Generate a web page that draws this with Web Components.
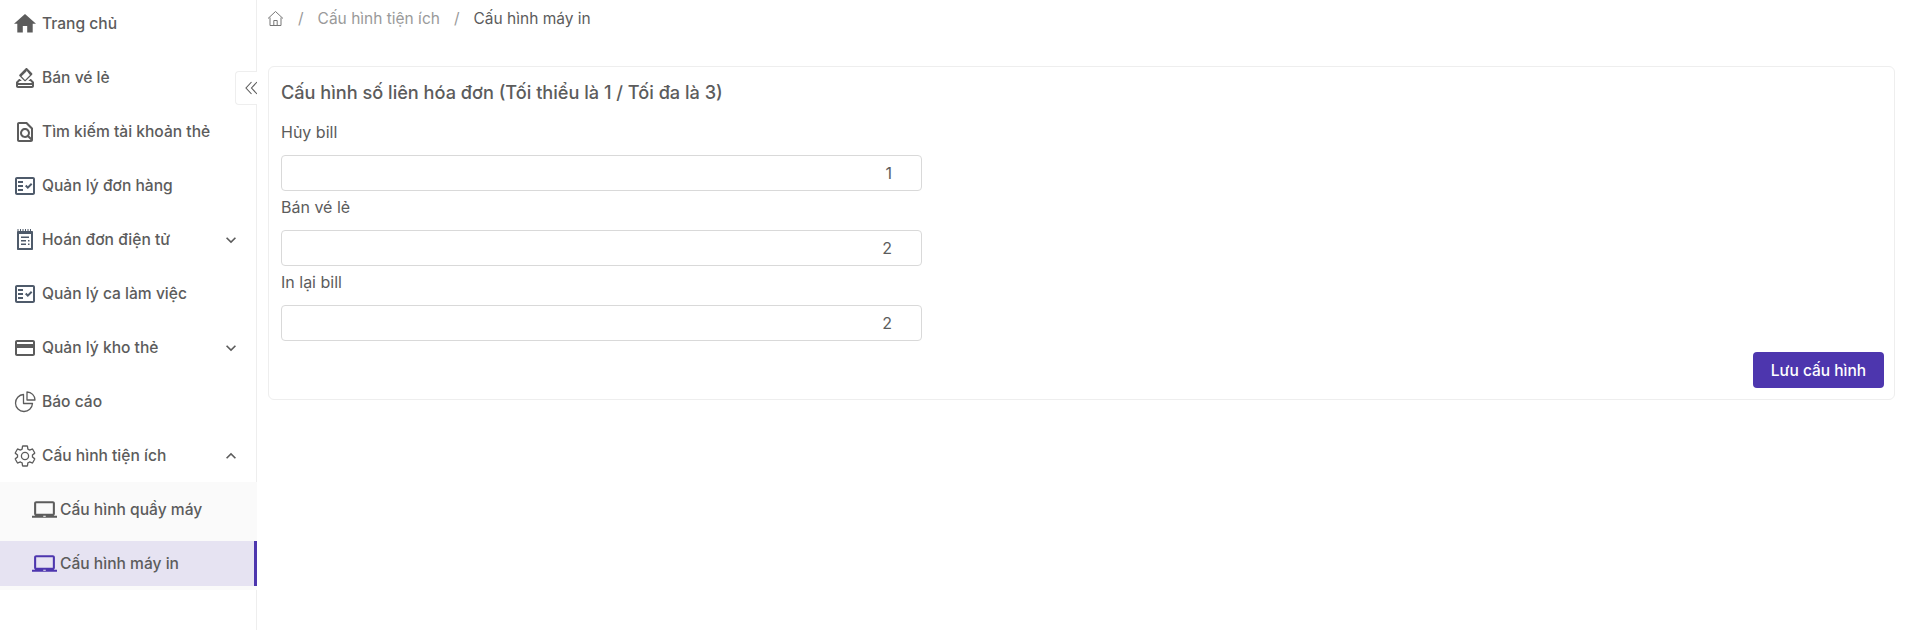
<!DOCTYPE html>
<html lang="vi">
<head>
<meta charset="utf-8">
<title>Cấu hình máy in</title>
<style>
  html, body { margin: 0; height: 100%; background: #fff; overflow: hidden; }
  body { font-family: Inter, "Noto Sans", sans-serif; color: #5c5c5c; }
</style>
</head>
<body>
<app-shell>
  <side-nav slot="nav">
    <nav-item icon="home">Trang chủ</nav-item>
    <nav-item icon="vote">Bán vé lẻ</nav-item>
    <nav-item icon="find">Tìm kiếm tài khoản thẻ</nav-item>
    <nav-item icon="check" tint="#4f5b6b">Quản lý đơn hàng</nav-item>
    <nav-item icon="note" tint="#4f5b6b" arrow="down">Hoán đơn điện tử</nav-item>
    <nav-item icon="check" tint="#4f5b6b">Quản lý ca làm việc</nav-item>
    <nav-item icon="card" arrow="down">Quản lý kho thẻ</nav-item>
    <nav-item icon="pie">Báo cáo</nav-item>
    <nav-group>
      <nav-item slot="head" icon="gear" arrow="up" flush>Cấu hình tiện ích</nav-item>
      <nav-item icon="laptop" sub>Cấu hình quầy máy</nav-item>
      <nav-item icon="laptop" sub active flush>Cấu hình máy in</nav-item>
    </nav-group>
  </side-nav>
  <bread-crumb>
    <crumb-item>Cấu hình tiện ích</crumb-item>
    <crumb-item current>Cấu hình máy in</crumb-item>
  </bread-crumb>
  <config-card title-text="Cấu hình số liên hóa đơn (Tối thiểu là 1 / Tối đa là 3)">
    <number-field label="Hủy bill">1</number-field>
    <number-field label="Bán vé lẻ">2</number-field>
    <number-field label="In lại bill">2</number-field>
    <button-primary slot="actions">Lưu cấu hình</button-primary>
  </config-card>
</app-shell>

<script>
const ICONS = {
  home: `<path transform="translate(-1.200 -1.400) scale(1.100)" d="M10 20v-6h4v6h5v-8h3L12 3 2 12h3v8z"/>`,
  vote: `<path d="M18 13h-.68l-2 2h1.91L19 17H5l1.78-2h2.05l-2-2H6l-3 3v4c0 1.1.89 2 1.99 2H19c1.1 0 2-.89 2-2v-4l-3-3zm1 7H5v-1h14v1zm-7.66-4.98c.39.39 1.02.39 1.41 0l6.36-6.36c.39-.39.39-1.02 0-1.41L14.16 2.3c-.38-.4-1.01-.4-1.4-.01L6.39 8.66c-.39.39-.39 1.02 0 1.41l4.95 4.95zm2.12-10.61L17 8.95l-4.95 4.95-3.54-3.54 4.95-4.95z"/>`,
  find: `<path d="M14 2H6c-1.1 0-2 .9-2 2v16c0 1.1.9 2 2 2h12c1.1 0 2-.9 2-2V8l-6-6zM6 4h7l5 5v8.58l-1.84-1.84c1.28-1.94 1.07-4.57-.64-6.28C14.55 8.49 13.28 8 12 8c-1.28 0-2.55.49-3.53 1.46-1.95 1.95-1.95 5.11 0 7.05.97.97 2.25 1.46 3.53 1.46.96 0 1.92-.28 2.75-.83L17.6 20H6V4zm8.11 11.1c-.56.56-1.31.88-2.11.88s-1.55-.31-2.11-.88c-.56-.56-.88-1.31-.88-2.11s.31-1.55.88-2.11c.56-.57 1.31-.88 2.11-.88s1.55.31 2.11.88c.56.56.88 1.31.88 2.11s-.31 1.55-.88 2.11z"/>`,
  check: `<path fill-rule="evenodd" d="M20 3H4c-1.1 0-2 .9-2 2v14c0 1.1.9 2 2 2h16c1.1 0 2-.9 2-2V5c0-1.1-.9-2-2-2zm0 16H4V5h16v14z"/><path d="M19.41 10.42 17.99 9l-3.17 3.17-1.41-1.42L12 12.17 14.82 15zM5 7h5v2H5zM5 11h5v2H5zM5 15h5v2H5z"/>`,
  note: `<path d="M5 3h14c.6 0 1 .4 1 1v17c0 .6-.4 1-1 1H5c-.6 0-1-.4-1-1V4c0-.6.4-1 1-1zm1 3v14h12V6H6z"/><path d="M4.500 1h1v2h-1zM7 1h1v2H7zM9.500 1h1v2h-1zM12 1h1v2h-1zM14.500 1h1v2h-1zM17 1h1v2h-1zM8 8.500h8v1.500H8zM8 12h5v1.500H8zM15 12h1.500v1.500H15zM8 15.500h5V17H8zM15 15.500h1.500V17H15z"/>`,
  card: `<path d="M20 4H4c-1.11 0-1.99.89-1.99 2L2 18c0 1.11.89 2 2 2h16c1.11 0 2-.89 2-2V6c0-1.11-.89-2-2-2zm0 14H4v-6h16v6zm0-10H4V6h16v2z"/>`,
  pie: `<g fill="none" stroke="currentColor" stroke-width="1.300" stroke-linejoin="round"><path d="M10.500 4.500a8.500 8.500 0 1 0 9 9h-9z"/><path d="M14 2a8 8 0 0 1 8 8h-8z"/></g>`,
  gear: `<g fill="none" stroke="currentColor" stroke-width="1.300" stroke-linejoin="round"><path d="M19.430 12.980c.04-.32.07-.64.07-.98 0-.34-.03-.66-.07-.98l2.110-1.650c.19-.15.24-.42.12-.64l-2-3.460c-.09-.16-.26-.25-.44-.25-.06 0-.12.01-.17.03l-2.490 1c-.52-.4-1.080-.73-1.690-.98l-.38-2.650C14.460 2.180 14.250 2 14 2h-4c-.25 0-.46.18-.49.42l-.38 2.650c-.61.25-1.170.59-1.690.98l-2.490-1c-.06-.02-.12-.03-.18-.03-.17 0-.34.09-.43.25l-2 3.460c-.13.22-.07.49.12.64l2.110 1.650c-.04.32-.07.65-.07.98 0 .33.03.66.07.98l-2.110 1.650c-.19.15-.24.42-.12.64l2 3.460c.09.16.26.25.44.25.06 0 .12-.01.17-.03l2.490-1c.52.4 1.080.73 1.690.98l.38 2.650c.03.24.24.42.49.42h4c.25 0 .46-.18.49-.42l.38-2.650c.61-.25 1.170-.59 1.690-.98l2.490 1c.06.02.12.03.18.03.17 0 .34-.09.43-.25l2-3.460c.12-.22.07-.49-.12-.64l-2.110-1.650z"/><circle cx="12" cy="12" r="3.600"/></g>`,
  laptop: `<path d="M20 18c1.1 0 1.99-.9 1.99-2L22 6c0-1.1-.9-2-2-2H4c-1.1 0-2 .9-2 2v10c0 1.1.9 2 2 2H0v2h24v-2h-4zM4 6h16v10H4V6z"/><path fill="var(--notch, #fafafa)" d="M10.800 18h2.400v1h-2.400z"/>`,
  down: `<path d="M16.59 8.59 12 13.17 7.41 8.59 6 10l6 6 6-6z"/>`,
  up: `<path d="M12 8l-6 6 1.41 1.41L12 10.83l4.59 4.58L18 14z"/>`
};

class AppShell extends HTMLElement {
  constructor() {
    super();
    this.attachShadow({ mode: "open" }).innerHTML = `
    <style>
      :host { display: flex; height: 100vh; }
      main { flex: 1; min-width: 0; padding: 0 12px 0 11px; }
    </style>
    <slot name="nav"></slot>
    <main><slot></slot></main>`;
  }
}

class SideNav extends HTMLElement {
  constructor() {
    super();
    this.attachShadow({ mode: "open" }).innerHTML = `
    <style>
      :host {
        display: block;
        position: relative;
        flex: none;
        width: 257px;
        box-sizing: border-box;
        padding-top: 1px;
        border-right: 1px solid #eeeeee;
      }
      .collapse {
        position: absolute;
        top: 71px;
        right: -1px;
        width: 22px;
        height: 34px;
        box-sizing: border-box;
        background: #fff;
        border: 1px solid #eeeeee;
        border-right: 0;
        border-radius: 4px 0 0 4px;
        display: flex;
        align-items: center;
        justify-content: flex-end;
      }
      .collapse svg { display: block; }
    </style>
    <slot></slot>
    <div class="collapse">
      <svg width="12" height="14" viewBox="0 0 12 14" fill="none" stroke="#5c5c5c" stroke-width="1.100">
        <path d="M6.500 1 1 7l5.500 6M12 1 6.500 7l5.500 6"/>
      </svg>
    </div>`;
  }
}

class NavGroup extends HTMLElement {
  constructor() {
    super();
    this.attachShadow({ mode: "open" }).innerHTML = `
    <style>
      :host { display: block; }
      .sub { margin: 4px -1px 0 0; padding: 5px 0 4px; background: #fafafa; }
    </style>
    <slot name="head"></slot>
    <div class="sub"><slot></slot></div>`;
  }
}

class NavItem extends HTMLElement {
  connectedCallback() {
    const shadowDOM = this.attachShadow({ mode: "open" });
    const icon = this.getAttribute("icon");
    const arrow = this.getAttribute("arrow");
    const tint = this.getAttribute("tint") || "#5c5c5c";
    shadowDOM.innerHTML = `
    <style>
      :host {
        display: flex;
        align-items: center;
        height: 45px;
        margin-bottom: 9px;
        padding-left: 13px;
        box-sizing: border-box;
        font-size: 15.600px;
        font-weight: 500;
        color: #5c5c5c;
      }
      :host([flush]) { margin-bottom: 0; }
      :host([sub]) { padding-left: 32px; }
      :host([active]) {
        background: #e6e3f2;
        border-right: 3px solid #4d36ae;
        --icon: #4d36ae;
        --notch: #e6e3f2;
      }
      .icon { flex: none; width: 24px; height: 24px; margin-right: 5px; fill: var(--icon, ${tint}); color: var(--icon, ${tint}); }
      :host([sub]) .icon { width: 25px; height: 25px; margin-right: 3px; }
      .label { flex: 1; white-space: nowrap; }
      .arrow { flex: none; width: 20px; height: 20px; margin-right: 15px; fill: #5c5c5c; }
    </style>
    <svg class="icon" viewBox="0 0 24 24">${ICONS[icon]}</svg>
    <span class="label"><slot></slot></span>
    ${arrow ? `<svg class="arrow" viewBox="0 0 24 24">${ICONS[arrow]}</svg>` : ""}`;
  }
}

class BreadCrumb extends HTMLElement {
  constructor() {
    super();
    this.attachShadow({ mode: "open" }).innerHTML = `
    <style>
      :host {
        display: flex;
        align-items: center;
        height: 36px;
        margin-bottom: 30px;
        margin-left: -1px;
        font-size: 15.500px;
        color: #9a9a9a;
      }
      svg { display: block; flex: none; }
    </style>
    <svg width="17" height="17" viewBox="0 0 17 17" fill="none" stroke="#777" stroke-width="1" stroke-linejoin="round">
      <path d="M1 8.500 8.500 1.500 16 8.500M3 7.500v8h11v-8M6.800 15.500V10.500h3.400v5"/>
    </svg>
    <slot></slot>`;
  }
}

class CrumbItem extends HTMLElement {
  constructor() {
    super();
    this.attachShadow({ mode: "open" }).innerHTML = `
    <style>
      :host { display: inline-flex; align-items: center; }
      :host([current]) { color: #5c5c5c; }
      .sep { margin: 0 14px; color: #9a9a9a; }
    </style>
    <span class="sep">/</span><slot></slot>`;
  }
}

class ConfigCard extends HTMLElement {
  connectedCallback() {
    const shadowDOM = this.attachShadow({ mode: "open" });
    shadowDOM.innerHTML = `
    <style>
      :host {
        display: block;
        box-sizing: border-box;
        padding: 12px 10px 11px 12px;
        background: #fff;
        border: 1px solid #eeeeee;
        border-radius: 6px;
      }
      h2 {
        margin: 0 0 16px;
        font-size: 18.150px;
        line-height: 26px;
        font-weight: 500;
        color: #5c5c5c;
      }
      .actions { display: flex; justify-content: flex-end; margin-top: 11px; }
    </style>
    <h2>${this.getAttribute("title-text")}</h2>
    <slot></slot>
    <div class="actions"><slot name="actions"></slot></div>`;
  }
}

class NumberField extends HTMLElement {
  connectedCallback() {
    const shadowDOM = this.attachShadow({ mode: "open" });
    shadowDOM.innerHTML = `
    <style>
      :host { display: block; width: 641px; margin-bottom: 5px; font-size: 16px; color: #5c5c5c; }
      label { display: block; line-height: 23px; margin-bottom: 11px; }
      .box {
        height: 36px;
        box-sizing: border-box;
        padding-right: 29px;
        display: flex;
        align-items: center;
        justify-content: flex-end;
        border: 1px solid #d9d9d9;
        border-radius: 4px;
        background: #fff;
      }
    </style>
    <label>${this.getAttribute("label")}</label>
    <div class="box"><slot></slot></div>`;
  }
}

class ButtonPrimary extends HTMLElement {
  constructor() {
    super();
    this.attachShadow({ mode: "open" }).innerHTML = `
    <style>
      :host {
        display: inline-flex;
        align-items: center;
        justify-content: center;
        width: 131px;
        height: 36px;
        border-radius: 4px;
        background: #4d36ae;
        color: #fff;
        font-size: 15.500px;
        font-weight: 500;
      }
    </style>
    <slot></slot>`;
  }
}

customElements.define("app-shell", AppShell);
customElements.define("side-nav", SideNav);
customElements.define("nav-group", NavGroup);
customElements.define("nav-item", NavItem);
customElements.define("bread-crumb", BreadCrumb);
customElements.define("crumb-item", CrumbItem);
customElements.define("config-card", ConfigCard);
customElements.define("number-field", NumberField);
customElements.define("button-primary", ButtonPrimary);
</script>
</body>
</html>
